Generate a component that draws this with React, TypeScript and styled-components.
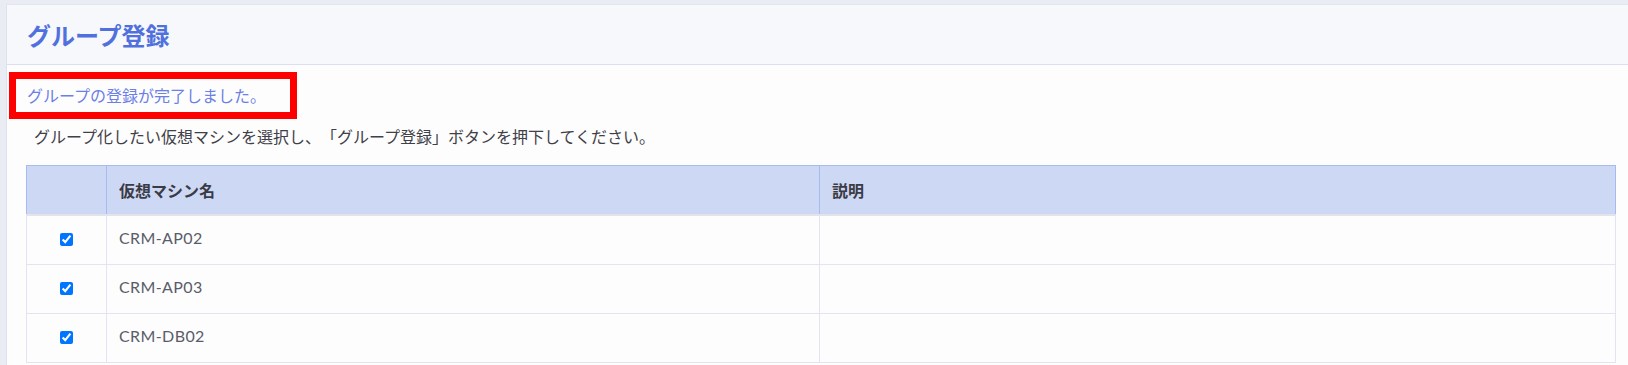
import React from "react";
import styled, {createGlobalStyle} from "styled-components";

const GlobalStyle = createGlobalStyle`
  html, body {
    margin: 0;
    padding: 0;
    background: #eaecf3;
    overflow: hidden;
  }
  body {
    font-family: "Noto Sans CJK JP", "Noto Sans", sans-serif;
    text-spacing-trim: space-all;
  }
`;

const Page = styled.div`
  padding: 4px 0 0 6px;
  width: 100vw;
  box-sizing: border-box;
  overflow: hidden;
`;

const Card = styled.div`
  width: 1660px;
  background: #fdfdfd;
  border-top: 1px solid #e3e5ef;
  border-left: 1px solid #dfe2ee;
`;

const CardHeader = styled.div`
  height: 59px;
  display: flex;
  align-items: center;
  padding-left: 20px;
  background: #f7f8fb;
  border-bottom: 1px solid #dcdff0;
`;

const Title = styled.h1`
  margin: 0;
  font-size: 24px;
  font-weight: 700;
  line-height: 1;
  color: #5070dd;
`;

const CardBody = styled.div`
  padding: 7px 0 40px 0;
`;

// red frame drawn round the notice in the screenshot
const Notice = styled.div`
  width: fit-content;
  margin-left: 2px;
  padding: 0 24px 0 11px;
  border: 7px solid #ff0000;
  font-size: 16px;
  line-height: 33px;
  color: #6c7fe6;
`;

const Lead = styled.p`
  margin: 5px 0 0 27px;
  font-size: 16px;
  line-height: 24px;
  color: #3f4048;
`;

const Table = styled.table`
  margin: 17px 0 0 19px;
  width: 1589px;
  table-layout: fixed;
  border-collapse: collapse;
`;

const HeadCell = styled.th<{ $center?: boolean }>`
  height: 48px;
  padding: 0 12px;
  background: #cdd8f5;
  border: 1px solid #a8bbef;
  border-bottom: 2px solid #e2e3ec;
  text-align: ${(p) => (p.$center ? "center" : "left")};
  font-size: 16px;
  font-weight: 700;
  color: #3a3b45;
`;

const Cell = styled.td<{ $center?: boolean }>`
  height: 44px;
  padding: 0 12px 4px;
  border: 1px solid #e3e4f2;
  text-align: ${(p) => (p.$center ? "center" : "left")};
  vertical-align: middle;
  font-family: "Lato", "Noto Sans CJK JP", sans-serif;
  font-size: 16px;
  line-height: 20px;
  letter-spacing: 0.4px;
  color: #5a5c69;
`;

const Check = styled.input`
  width: 13px;
  height: 13px;
  margin: 0;
  vertical-align: middle;
  accent-color: #0075ff;
`;

const machines = ["CRM-AP02", "CRM-AP03", "CRM-DB02"];

const App = () => {
    return (
        <>
            <GlobalStyle/>
            <Page>
                <Card>
                    <CardHeader>
                        <Title>グループ登録</Title>
                    </CardHeader>
                    <CardBody>
                        <Notice>グループの登録が完了しました。</Notice>
                        <Lead>グループ化したい仮想マシンを選択し、「グループ登録」ボタンを押下してください。</Lead>
                        <Table>
                            <colgroup>
                                <col style={{width: 80}}/>
                                <col style={{width: 713}}/>
                                <col style={{width: 796}}/>
                            </colgroup>
                            <thead>
                            <tr>
                                <HeadCell $center/>
                                <HeadCell>仮想マシン名</HeadCell>
                                <HeadCell>説明</HeadCell>
                            </tr>
                            </thead>
                            <tbody>
                            {machines.map((name) => (
                                <tr key={name}>
                                    <Cell $center>
                                        <Check type="checkbox" checked readOnly/>
                                    </Cell>
                                    <Cell>{name}</Cell>
                                    <Cell/>
                                </tr>
                            ))}
                            </tbody>
                        </Table>
                    </CardBody>
                </Card>
            </Page>
        </>
    );
};

export default App;
